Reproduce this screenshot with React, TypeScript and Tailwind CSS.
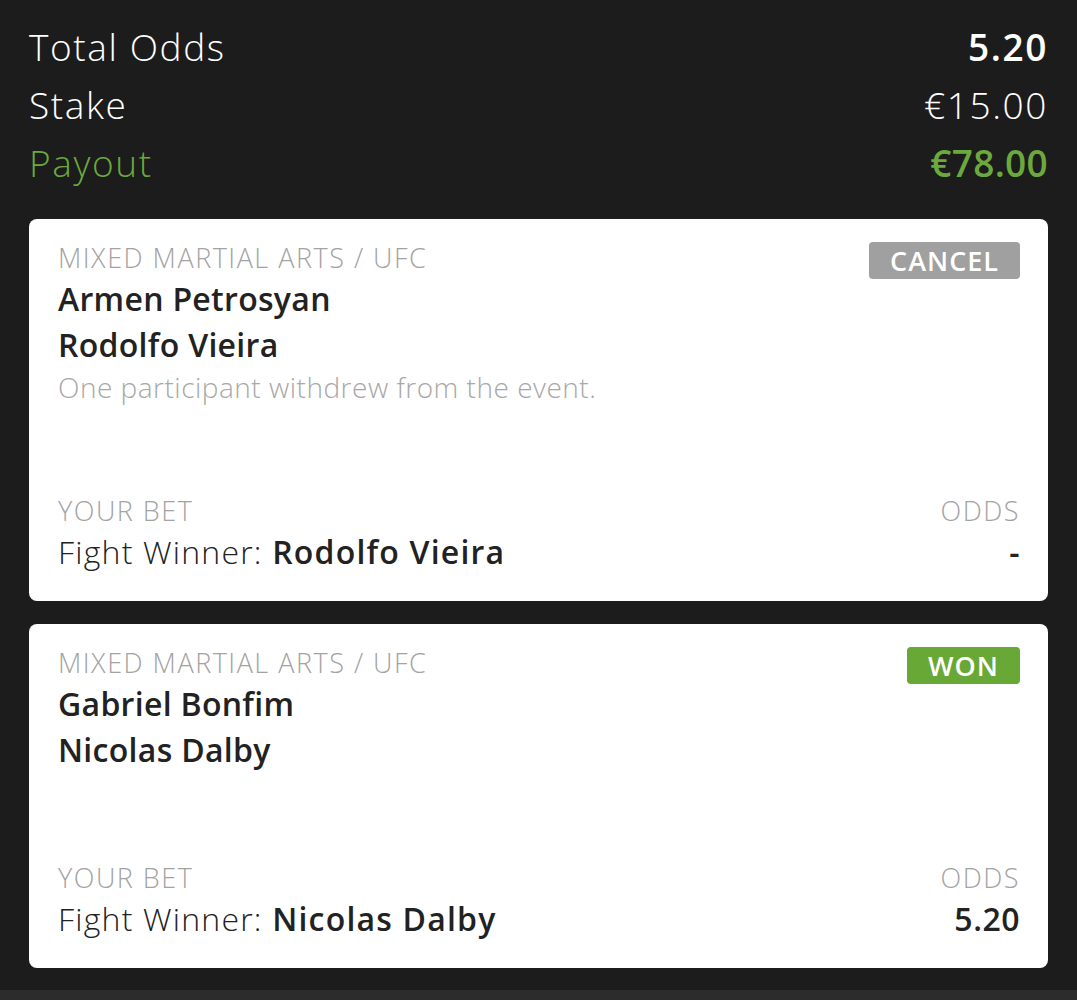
export default function App() {
  return (
    <div className="flex h-[1000px] w-[1077px] flex-col bg-[#1c1c1c] font-['Open_Sans',sans-serif]">
      <div className="flex flex-1 flex-col px-[29px] pt-[18px]">
        <Summary />
        <div className="mt-[27px] flex flex-col gap-[23px]">
          <BetCard
            teamA="Armen Petrosyan"
            teamB="Rodolfo Vieira"
            note="One participant withdrew from the event."
            status="CANCEL"
            pick="Rodolfo Vieira"
            odds="-"
          />
          <BetCard
            teamA="Gabriel Bonfim"
            teamB="Nicolas Dalby"
            status="WON"
            pick="Nicolas Dalby"
            odds="5.20"
          />
        </div>
      </div>
      <div className="h-[10px] bg-[#2c2c2c]" />
    </div>
  )
}

function Summary() {
  return (
    <div className="flex flex-col text-[37px] leading-[58px] tracking-[1.6px]">
      <div className="flex justify-between text-white">
        <span className="font-light">Total Odds</span>
        <span className="font-semibold">5.20</span>
      </div>
      <div className="flex justify-between text-white">
        <span className="font-light">Stake</span>
        <span className="font-light">€15.00</span>
      </div>
      <div className="flex justify-between text-[#6ba93c]">
        <span className="font-light">Payout</span>
        <span className="font-semibold tracking-[0.3px]">€78.00</span>
      </div>
    </div>
  )
}

function BetCard({teamA, teamB, note, status, pick, odds}: {
  teamA: string;
  teamB: string;
  note?: string;
  status: "CANCEL" | "WON";
  pick: string;
  odds: string
}) {
  const badge = status === "WON" ? "bg-[#67a836]" : "bg-[#a0a0a0]"
  return (
    <div className="flex flex-col rounded-[8px] bg-white pl-[29px] pr-[28px] pt-[23px] pb-[30px]">
      <div className="flex items-start justify-between">
        <div className="flex flex-col">
          <span className="text-[27px] font-light leading-[32px] tracking-[1.5px] text-[#a3a3a3]">MIXED MARTIAL ARTS / UFC</span>
          <span className="mt-[2px] text-[32px] font-semibold leading-[46px] tracking-[0.3px] text-[#222]">{teamA}</span>
          <span className="text-[32px] font-semibold leading-[46px] tracking-[0.3px] text-[#222]">{teamB}</span>
          {note && (
            <span className="text-[28px] font-light leading-[38px] tracking-[0.5px] text-[#a8a8a8]">{note}</span>
          )}
        </div>
        <span className={`${badge} rounded-[4px] px-[21px] text-[27px] font-semibold leading-[37px] tracking-[1px] text-white`}>
          {status}
        </span>
      </div>
      <div className="mt-[89px]">
        <div className="flex justify-between text-[27px] font-light leading-[32px] tracking-[1.5px] text-[#a3a3a3]">
          <span>YOUR BET</span>
          <span>ODDS</span>
        </div>
        <div className="mt-[6px] flex justify-between text-[32px] leading-[38px] tracking-[1.2px] text-[#222]">
          <span className="font-light">Fight Winner: <span className="font-semibold">{pick}</span></span>
          <span className="font-semibold tracking-[0.5px]">{odds}</span>
        </div>
      </div>
    </div>
  )
}
